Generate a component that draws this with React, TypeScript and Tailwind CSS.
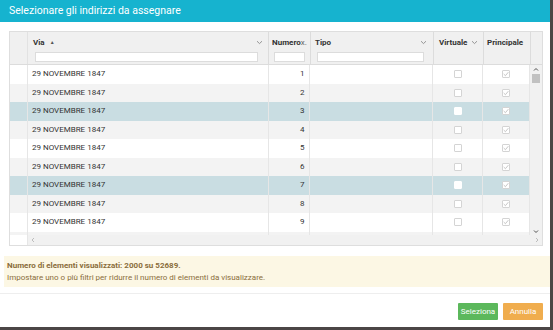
import React from "react";

const rows = [1, 2, 3, 4, 5, 6, 7, 8, 9, 10];
const selected = new Set([3, 7]);

function Chevron() {
  return (
    <svg width="7" height="5" viewBox="0 0 7 5" className="shrink-0">
      <path d="M1 1.2 L3.5 3.6 L6 1.2" fill="none" stroke="#8a8a8a" strokeWidth="0.9" />
    </svg>
  );
}

function Box({ checked, white }: { checked?: boolean; white?: boolean }) {
  return (
    <div
      className={
        "w-[8px] h-[8px] border rounded-[1px] flex items-center justify-center " +
        (white ? "bg-white border-white" : "bg-white border-[#d4d4d4]")
      }
    >
      {checked && (
        <svg width="7" height="6" viewBox="0 0 7 6">
          <path d="M0.8 3 L2.8 5 L6.2 0.9" fill="none" stroke="#b5b5b5" strokeWidth="0.9" />
        </svg>
      )}
    </div>
  );
}

export default function App() {
  return (
    <div
      className="w-[553px] h-[330px] bg-[#4b4646] overflow-hidden"
      style={{ fontFamily: "Roboto, 'Liberation Sans', sans-serif" }}
    >
      <div className="w-[550px] h-[327px] bg-white flex flex-col">
        {/* title */}
        <div className="h-[22px] bg-[#16b3cf] flex items-center px-[9px] text-white text-[10.5px] leading-none">
          Selezionare gli indirizzi da assegnare
        </div>

        {/* grid */}
        <div className="pt-[9px] px-[9px]">
          <div className="w-[534px] border border-[#dedede] flex flex-col text-[8px] text-[#333]">
            {/* header */}
            <div className="h-[33px] flex bg-[#f0f0f0] border-b border-[#dcdcdc]">
              <div className="w-[18px] border-r border-[#e2e2e2]" />
              <div className="w-[241px] border-r border-[#dcdcdc] px-[5px] pt-[6px] flex flex-col gap-[5px]">
                <div className="flex items-center justify-between h-[9px]">
                  <div className="flex items-center gap-[5px] font-bold">
                    <span>Via</span>
                    <span className="text-[5px] text-[#555]">▲</span>
                  </div>
                  <Chevron />
                </div>
                <div className="h-[10px] bg-white border border-[#dcdcdc] mx-[2px] mr-[5px]" />
              </div>
              <div className="w-[42px] border-r border-[#dcdcdc] px-[3px] pt-[6px] flex flex-col gap-[5px]">
                <div className="h-[9px] flex items-center font-bold overflow-hidden whitespace-nowrap">
                  Numero<span className="font-normal text-[#666]">x.</span>
                </div>
                <div className="h-[10px] bg-white border border-[#dcdcdc] mx-[2px]" />
              </div>
              <div className="w-[123px] border-r border-[#dcdcdc] px-[4px] pt-[6px] flex flex-col gap-[5px]">
                <div className="flex items-center justify-between h-[9px]">
                  <span className="font-bold">Tipo</span>
                  <span className="mr-[2px]">
                    <Chevron />
                  </span>
                </div>
                <div className="h-[10px] bg-white border border-[#dcdcdc] mx-[2px] mr-[5px]" />
              </div>
              <div className="w-[50px] border-r border-[#dcdcdc] px-[5px] pt-[6px]">
                <div className="flex items-center justify-between h-[9px]">
                  <span className="font-bold">Virtuale</span>
                  <Chevron />
                </div>
              </div>
              <div className="w-[47px] border-r border-[#dcdcdc] px-[3px] pt-[6px]">
                <div className="h-[9px] flex items-center font-bold">Principale</div>
              </div>
              <div className="flex-1" />
            </div>

            {/* body */}
            <div className="h-[170px] flex">
              <div className="flex-1 overflow-hidden">
                {rows.map((n) => {
                  const sel = selected.has(n);
                  const last = n === 10;
                  const bg = sel ? "bg-[#c9dde2]" : n % 2 === 0 ? "bg-[#f3f3f3]" : "bg-white";
                  return (
                    <div key={n} className={"h-[18.5px] flex " + bg}>
                      <div className="w-[18px] border-r border-[#e6e6e6]" />
                      <div className="w-[241px] border-r border-[#e6e6e6] pl-[4px] flex items-center">
                        {last ? "" : "29 NOVEMBRE 1847"}
                      </div>
                      <div className="w-[42px] border-r border-[#e6e6e6] pr-[5px] flex items-center justify-end">
                        {last ? "" : n}
                      </div>
                      <div className="w-[123px] border-r border-[#e6e6e6]" />
                      <div className="w-[50px] border-r border-[#e6e6e6] flex items-center justify-center">
                        <Box white={sel} />
                      </div>
                      <div className="w-[47px] border-r border-[#e6e6e6] flex items-center justify-center">
                        <Box checked />
                      </div>
                    </div>
                  );
                })}
              </div>
              <div className="w-[12px] bg-[#f1f1f1] flex flex-col items-center pt-[2px] pb-[1px]">
                <svg width="6" height="5" viewBox="0 0 6 5">
                  <path d="M1 3.5 L3 1.5 L5 3.5" fill="none" stroke="#505050" strokeWidth="1" />
                </svg>
                <div className="w-[8px] h-[9px] bg-[#c1c1c1] mt-[2px]" />
                <div className="flex-1" />
                <svg width="6" height="5" viewBox="0 0 6 5">
                  <path d="M1 1.5 L3 3.5 L5 1.5" fill="none" stroke="#505050" strokeWidth="1" />
                </svg>
              </div>
            </div>

            {/* horizontal scrollbar */}
            <div className="h-[10px] flex">
              <div className="w-[18px] bg-white border-r border-[#e6e6e6]" />
              <div className="flex-1 bg-[#f1f1f1] flex items-center justify-between px-[3px]">
                <svg width="4" height="6" viewBox="0 0 4 6">
                  <path d="M3 1 L1 3 L3 5" fill="none" stroke="#b0b0b0" strokeWidth="0.8" />
                </svg>
                <svg width="4" height="6" viewBox="0 0 4 6">
                  <path d="M1 1 L3 3 L1 5" fill="none" stroke="#b0b0b0" strokeWidth="0.8" />
                </svg>
              </div>
            </div>
          </div>
        </div>

        {/* notice */}
        <div className="mt-[10px] ml-[4px] h-[31px] bg-[#fcf7e4] px-[3px] flex flex-col justify-center text-[8px] leading-[12px] text-[#8a6d3b]">
          <div className="font-bold">Numero di elementi visualizzati: 2000 su 52689.</div>
          <div>Impostare uno o più filtri per ridurre il numero di elementi da visualizzare.</div>
        </div>

        {/* footer */}
        <div className="mt-[6px] border-t border-[#eeeeee] flex-1 flex justify-end items-start pt-[9px] pr-[7px] gap-[5px]">
          <div className="w-[40px] h-[17px] bg-[#5cb85c] text-white text-[8px] flex items-center justify-center rounded-[1px]">
            Seleziona
          </div>
          <div className="w-[40px] h-[17px] bg-[#f0ad4e] text-white text-[8px] flex items-center justify-center rounded-[1px]">
            Annulla
          </div>
        </div>
      </div>
    </div>
  );
}
